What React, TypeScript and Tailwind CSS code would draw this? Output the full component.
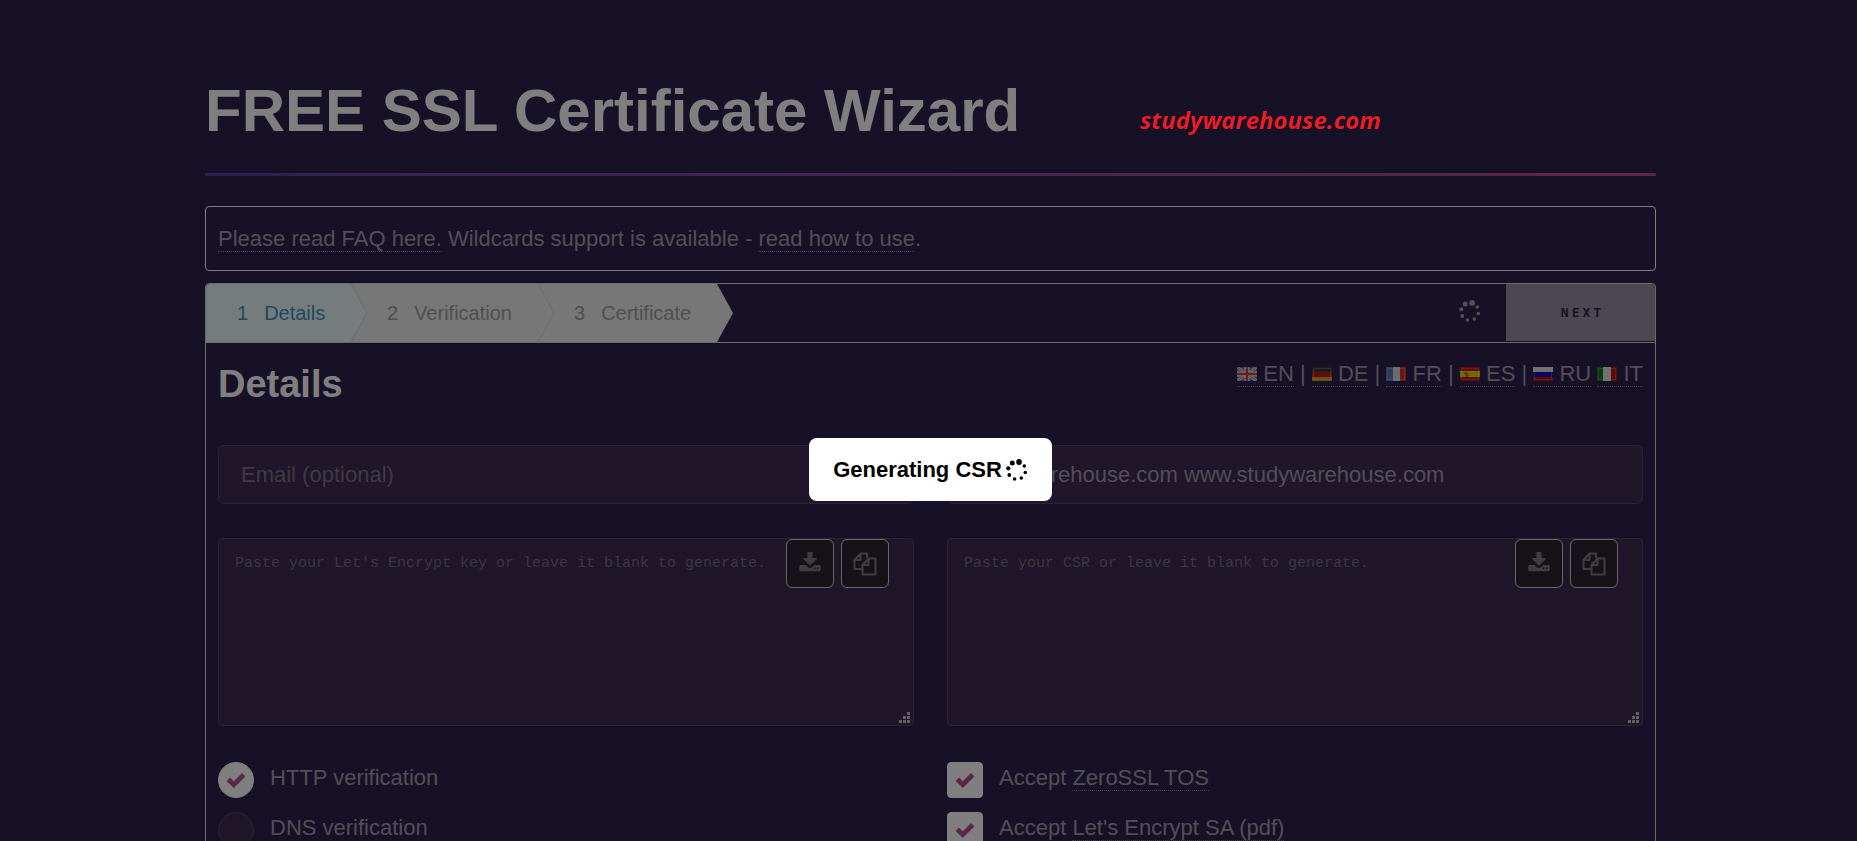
import type { ReactNode } from "react"
import clsx from "clsx"

const steps = [
  { id: 1, label: "Details", box: "w-[145px] pl-[31px] rounded-tl-sm bg-[#ecf6fb] text-[#3a95c4]", arrow: "fill-[#ecf6fb]" },
  { id: 2, label: "Verification", box: "w-[187px] pl-9 bg-[#eeeeee] text-[#a0a0a0]", arrow: "fill-[#eeeeee]" },
  { id: 3, label: "Certificate", box: "w-[179px] pl-9 bg-[#eeeeee] text-[#a0a0a0]", arrow: "fill-[#eeeeee]" },
]

const languages = [
  { code: "EN", separator: " | " },
  { code: "DE", separator: " | " },
  { code: "FR", separator: " | " },
  { code: "ES", separator: " | " },
  { code: "RU", separator: " " },
  { code: "IT", separator: "" },
]

const linkClass = "border-b border-dotted border-[#83798c]"
const inputClass =
  "block h-[59px] w-full rounded-md border border-[#54485c] bg-[#3e2d52] px-[22px] text-[#a29dac] placeholder:text-[#7d7486]"
const iconButtonClass =
  "flex h-[49px] w-12 items-start justify-center rounded-md border border-[#cfcfd4] bg-[#2a262e] pt-3 text-[#7e7886]"

function Spinner() {
  return (
    <svg viewBox="0 0 22 22" className="h-[22px] w-[22px] shrink-0 fill-current" aria-hidden="true">
      <circle cx="13" cy="3" r="2.9" />
      <circle cx="6.3" cy="4" r="2.5" />
      <circle cx="2.3" cy="9.3" r="2.1" />
      <circle cx="3.3" cy="16" r="1.9" />
      <circle cx="8.6" cy="20" r="1.8" />
      <circle cx="15.3" cy="19" r="1.8" />
      <circle cx="19.3" cy="13.5" r="1.8" />
      <circle cx="18.3" cy="7" r="1.8" />
    </svg>
  )
}

function Flag({ code }: { code: string }) {
  return (
    <svg viewBox="0 0 20 14" className="inline h-3.5 w-5 align-baseline" aria-hidden="true">
      {code === "EN" && (
        <>
          <rect width="20" height="14" fill="#3f68a8" />
          <path d="M0 0L20 14M20 0L0 14" stroke="#d0d0dc" strokeWidth="3" />
          <path d="M0 0L20 14M20 0L0 14" stroke="#c85c68" strokeWidth="1" />
          <path d="M10 0V14M0 7H20" stroke="#e0e0e0" strokeWidth="5" />
          <path d="M10 0V14M0 7H20" stroke="#d03838" strokeWidth="2.5" />
        </>
      )}
      {code === "DE" && (
        <>
          <rect width="20" height="5" fill="#3a3a30" />
          <rect y="5" width="20" height="5" fill="#c81414" />
          <rect y="10" width="20" height="4" fill="#c8a018" />
        </>
      )}
      {code === "FR" && (
        <>
          <rect width="7" height="14" fill="#5878b8" />
          <rect x="7" width="7" height="14" fill="#d8d8d8" />
          <rect x="14" width="6" height="14" fill="#d83028" />
        </>
      )}
      {code === "ES" && (
        <>
          <rect width="20" height="14" fill="#c41010" />
          <rect y="4" width="20" height="6" fill="#e0d000" />
          <path d="M4.5 5h3v1.5h1v3h-3V7h-1z" fill="#c86020" />
        </>
      )}
      {code === "RU" && (
        <>
          <rect width="20" height="5" fill="#e0e0e0" />
          <rect y="5" width="20" height="5" fill="#1010c0" />
          <rect y="10" width="20" height="4" fill="#c01010" />
        </>
      )}
      {code === "IT" && (
        <>
          <rect width="6" height="14" fill="#107818" />
          <rect x="6" width="8" height="14" fill="#e0e0e0" />
          <rect x="14" width="6" height="14" fill="#c01010" />
        </>
      )}
      <rect x="1.5" y="1.5" width="17" height="11" fill="none" stroke="#ffffff" strokeOpacity="0.2" />
    </svg>
  )
}

function DownloadIcon() {
  return (
    <svg viewBox="0 0 22 20" className="h-5 w-[22px] fill-current" aria-hidden="true">
      <path d="M8.5 0h5v6h4q.8.2.3.9l-6 6q-.8.6-1.600 0l-6-6q-.5-.7.3-.9h4z" />
      <path
        fillRule="evenodd"
        d="M1.500 13h5l2.500 2.200q2 1.400 4 0L15.500 13h5q1.200.2 1.200 1.200v3.800q0 1.200-1.200 1.200h-19Q.3 19.200.3 18v-3.800Q.3 13.200 1.500 13zM15 15.500v1.500h1.500v-1.500zM18 15.500v1.500h1.500v-1.500z"
      />
    </svg>
  )
}

function CopyIcon() {
  return (
    <svg
      viewBox="0 0 24 24"
      className="h-6 w-6 fill-none stroke-current stroke-2"
      strokeLinejoin="round"
      aria-hidden="true"
    >
      <path d="M9 17H1.5V8L7.5 1.500H14V6M7.5 1.5V8H1.500" />
      <path d="M15.500 6.500H22.500V22.500H9.500V13zM15.500 6.500V13H9.500" />
    </svg>
  )
}

function PasteBox({ id, label }: { id: string; label: string }) {
  return (
    <div className="relative">
      <textarea
        id={id}
        aria-label={label}
        placeholder={label}
        className="block h-[188px] w-full resize-none rounded border border-[#54485c] bg-[#3e2d52] px-4 py-3 font-['Liberation_Mono',monospace] text-[15px] leading-[26px] text-[#a29dac] placeholder:text-[#756e7c]"
      />
      <div className="absolute top-px right-[25px] flex gap-[7px]">
        <button type="button" aria-label="Download" className={iconButtonClass}>
          <DownloadIcon />
        </button>
        <button type="button" aria-label="Copy" className={iconButtonClass}>
          <CopyIcon />
        </button>
      </div>
      {/* resize grip */}
      <svg viewBox="0 0 11 11" className="absolute right-1 bottom-[3px] h-[11px] w-[11px] fill-[#c4beb8]" aria-hidden="true">
        <path d="M8 0h3v3H8zM4 4h3v3H4zM8 4h3v3H8zM0 8h3v3H0zM4 8h3v3H4zM8 8h3v3H8z" />
      </svg>
    </div>
  )
}

interface ChoiceProps {
  type: "radio" | "checkbox"
  name: string
  checked?: boolean
  children: ReactNode
}

function Choice({ type, name, checked, children }: ChoiceProps) {
  return (
    <label className="flex h-9 items-start gap-4">
      <span className="relative h-9 w-9 shrink-0">
        <input
          type={type}
          name={name}
          defaultChecked={checked}
          className={clsx(
            "peer block h-9 w-9 appearance-none border border-[#54485c] bg-[#3e2d52] checked:border-white checked:bg-white",
            type === "radio" ? "rounded-full" : "rounded"
          )}
        />
        <svg
          viewBox="0 0 20 20"
          className="pointer-events-none absolute top-2 left-2 hidden h-5 w-5 fill-none stroke-[#b74e91] peer-checked:block"
          aria-hidden="true"
        >
          <path d="M2.3 9.2L7.8 14.6 17.700 4.700" strokeWidth="4.800" />
        </svg>
      </span>
      <span className="leading-8">{children}</span>
    </label>
  )
}

export default function App() {
  return (
    <div className="h-screen overflow-hidden bg-[#2f224e] pl-1 font-['Liberation_Sans',Arial,sans-serif] text-[22px] text-[#a29dac]">
      <main className="mx-auto max-w-[1451px] pt-[70px]">
        <header className="flex h-[103px] items-start">
          <h1 className="text-[60px] leading-[82px] font-bold text-white">FREE SSL Certificate Wizard</h1>
          <p className="relative z-20 mt-8 ml-[120px] font-['Open_Sans',sans-serif] text-2xl leading-9 font-bold text-[#ed1c24] italic">
            studywarehouse.com
          </p>
        </header>
        <div className="h-[3px] rounded-full bg-linear-to-r from-[#5e42a6] to-[#b74e91]" />

        <p className="mt-[30px] rounded border border-white px-3 py-4 leading-[31px]">
          <a href="#faq" className={linkClass}>Please read FAQ here.</a> Wildcards support is available -{" "}
          <a href="#wildcards" className={linkClass}>read how to use</a>.
        </p>

        <section className="mt-3 rounded-t border border-[#d4d4d4]">
          {/* Step bar */}
          <div className="flex h-[59px] items-start border-b border-[#d4d4d4]">
            <ol className="flex h-full text-xl">
              {steps.map((step, i) => (
                <li key={step.id} className={clsx("relative flex items-center gap-4", step.box)}>
                  <span>{step.id}</span>
                  <span>{step.label}</span>
                  <svg viewBox="0 0 17 58" className="absolute top-0 left-full z-1 h-full w-[17px]" aria-hidden="true">
                    <path d="M0 0L16 29L0 58z" className={step.arrow} />
                    {i < 2 && <path d="M0 0L16 29L0 58" fill="none" stroke="#dadada" />}
                  </svg>
                </li>
              ))}
            </ol>
            <div className="mt-4 mr-[25px] ml-auto">
              <Spinner />
            </div>
            <button
              type="button"
              className="h-[57px] w-[149px] rounded-tr-sm bg-[#98909f] pl-1 font-['DejaVu_Sans_Mono',monospace] text-[13px] font-bold tracking-[3px] text-[#2f224e]"
            >
              NEXT
            </button>
          </div>

          <form className="px-3 pb-9">
            <div className="flex h-[102px] items-start justify-between">
              <h2 className="pt-[21px] text-[38px] leading-10 font-bold text-white">Details</h2>
              <p className="pt-[15px] leading-8">
                {languages.map(({ code, separator }) => (
                  <span key={code}>
                    <a href={`#${code.toLowerCase()}`} className={linkClass}>
                      <Flag code={code} /> {code}
                    </a>
                    {separator}
                  </span>
                ))}
              </p>
            </div>

            <div className="grid grid-cols-2 gap-x-[33px] gap-y-[34px]">
              <input type="email" aria-label="Email" placeholder="Email (optional)" className={inputClass} />
              <input
                type="text"
                aria-label="Domains"
                defaultValue="studywarehouse.com www.studywarehouse.com"
                className={inputClass}
              />
              <PasteBox id="key" label="Paste your Let's Encrypt key or leave it blank to generate." />
              <PasteBox id="csr" label="Paste your CSR or leave it blank to generate." />
            </div>

            <div className="mt-9 grid grid-cols-2 gap-x-[33px] gap-y-3.5">
              <Choice type="radio" name="verification" checked>HTTP verification</Choice>
              <Choice type="checkbox" name="tos" checked>
                Accept <a href="#tos" className={linkClass}>ZeroSSL TOS</a>
              </Choice>
              <Choice type="radio" name="verification">DNS verification</Choice>
              <Choice type="checkbox" name="sa" checked>
                Accept <a href="#sa" className={linkClass}>Let's Encrypt SA (pdf)</a>
              </Choice>
            </div>
          </form>
        </section>
      </main>

      {/* Progress dialog */}
      <div className="fixed inset-0 z-10 flex items-start justify-center bg-black/50 pt-[438px] pl-1">
        <div role="status" className="flex items-center gap-1 rounded-lg bg-white px-6 py-4 leading-[31px] font-bold text-black">
          Generating CSR
          <Spinner />
        </div>
      </div>
    </div>
  )
}
